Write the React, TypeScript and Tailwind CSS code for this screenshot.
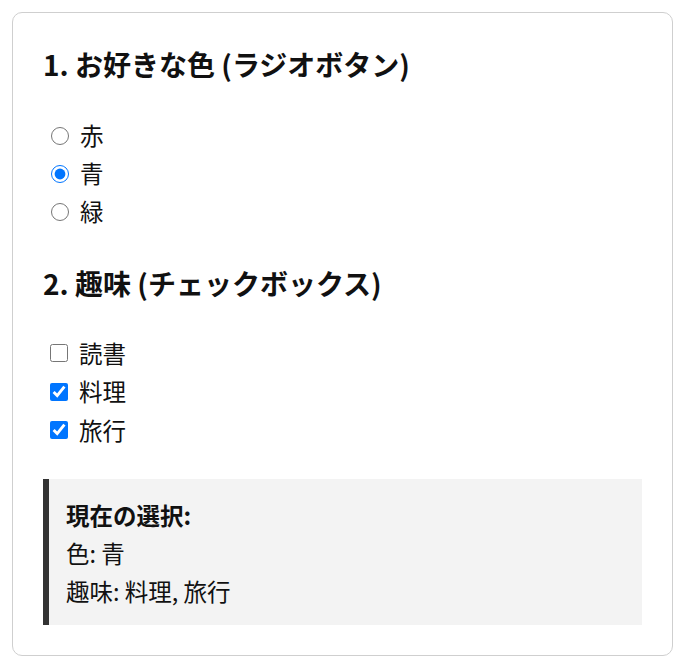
import { useState } from "react"

const colors = ["赤", "青", "緑"]
const hobbies = ["読書", "料理", "旅行"]

export default function App() {
  const [color, setColor] = useState("青")
  const [picked, setPicked] = useState<string[]>(["料理", "旅行"])

  const toggle = (h: string) =>
    setPicked((prev) =>
      prev.includes(h) ? prev.filter((x) => x !== h) : hobbies.filter((x) => x === h || prev.includes(x))
    )

  return (
    <div className="bg-white pt-[12px] pl-[12px] pr-[10px] pb-[10px] font-['Noto_Sans_CJK_JP','Noto_Sans',sans-serif] text-[#111]">
      <div className="rounded-[10px] border border-[#cfcfcf] p-[30px]">
        {/* Section 1 */}
        <h2 className="pb-[8px] text-[28px] font-bold leading-[42px]">1. お好きな色 (ラジオボタン)</h2>
        <div className="mt-[24px]">
          {colors.map((c) => (
            <label key={c} className="flex h-[38px] items-center gap-[11px] pl-[8px] text-[23.5px] cursor-pointer">
              <input
                type="radio"
                name="color"
                checked={color === c}
                onChange={() => setColor(c)}
                className="m-0 h-[18px] w-[18px] accent-[#0075ff]"
              />
              {c}
            </label>
          ))}
        </div>

        {/* Section 2 */}
        <h2 className="mt-[31px] pb-[8px] text-[28px] font-bold leading-[42px]">2. 趣味 (チェックボックス)</h2>
        <div className="mt-[22px]">
          {hobbies.map((h) => (
            <label key={h} className="flex h-[38.5px] items-center gap-[11px] pl-[7px] text-[23.5px] cursor-pointer">
              <input
                type="checkbox"
                checked={picked.includes(h)}
                onChange={() => toggle(h)}
                className="m-0 h-[18px] w-[18px] accent-[#0075ff]"
              />
              {h}
            </label>
          ))}
        </div>

        {/* Summary */}
        <div className="mt-[29px] border-l-[6px] border-[#333] bg-[#f3f3f3] pt-[17px] pb-[15px] pl-[17px] text-[23.5px] leading-[38px]">
          <div className="font-bold">現在の選択:</div>
          <div>色: {color}</div>
          <div>趣味: {picked.length ? picked.join(", ") : "なし"}</div>
        </div>
      </div>
    </div>
  )
}
